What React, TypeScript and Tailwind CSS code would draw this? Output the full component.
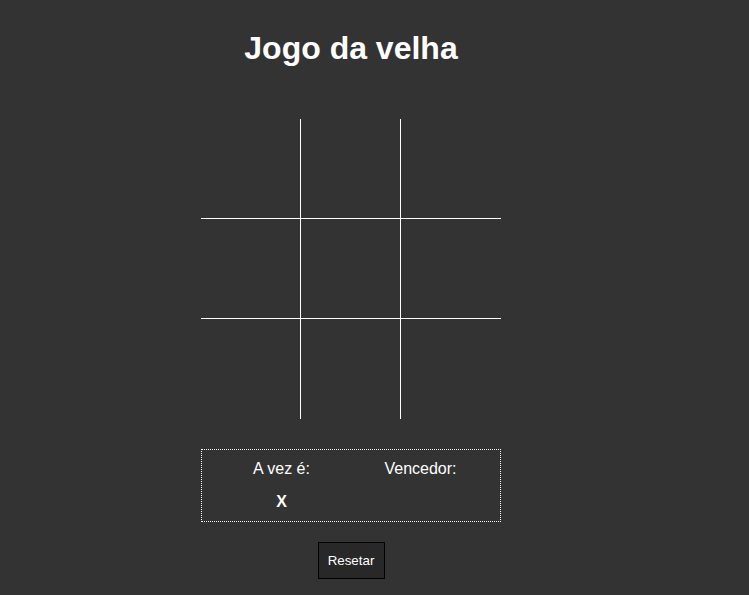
import { useState } from 'react'

export default function App() {
  const [board, setBoard] = useState<string[]>(Array(9).fill(''))
  const [turn, setTurn] = useState('X')

  const play = (i: number) => {
    if (board[i]) return
    const next = [...board]
    next[i] = turn
    setBoard(next)
    setTurn(turn === 'X' ? 'O' : 'X')
  }

  const cellBorder = (i: number) => {
    const col = i % 3
    const row = Math.floor(i / 3)
    const right = col < 2 ? 'border-r' : ''
    const bottom = row < 2 ? 'border-b' : ''
    return `${right} ${bottom}`
  }

  return (
    <div className="min-h-[595px] bg-[#333333] text-white font-['Liberation_Sans',Arial,sans-serif]">
      <div className="w-[300px] ml-[201px] flex flex-col items-center pt-[30px]">
        <h1 className="text-[32px] leading-[37px] font-bold">Jogo da velha</h1>

        <div className="mt-[52px] grid grid-cols-[100px_100px_100px] grid-rows-[100px_100px_100px]">
          {board.map((v, i) => (
            <div
              key={i}
              onClick={() => play(i)}
              className={`border-white ${cellBorder(i)} flex items-center justify-center text-5xl font-bold cursor-pointer`}
            >
              {v}
            </div>
          ))}
        </div>

        <div className="mt-[30px] w-[300px] h-[73px] border border-dotted border-white px-[10px] pt-[10px] grid grid-cols-2 text-center text-base leading-[18px]">
          <div className="flex flex-col">
            <span>A vez é:</span>
            <span className="mt-[15px] font-bold">{turn}</span>
          </div>
          <div className="flex flex-col">
            <span>Vencedor:</span>
          </div>
        </div>

        <button
          onClick={() => {
            setBoard(Array(9).fill(''))
            setTurn('X')
          }}
          className="mt-[20px] w-[67px] h-[37px] bg-[#282828] border border-black text-[13.33px] text-white"
        >
          Resetar
        </button>
      </div>
    </div>
  )
}
